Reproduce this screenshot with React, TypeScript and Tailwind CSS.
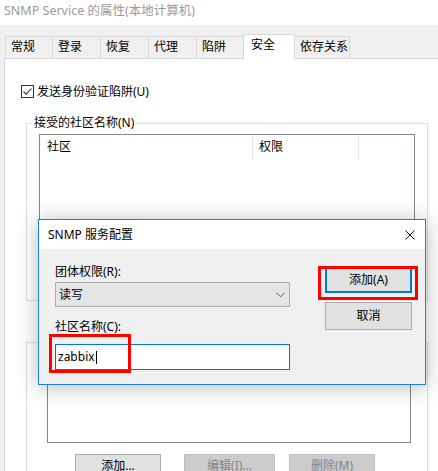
import React from "react";

const Tab = ({ label, w, active, first }: { label: string; w: string; active?: boolean; first?: boolean }) => {
  if (active) {
    return (
      <div className={`${w} ${first ? "" : "-ml-px"} h-[25px] -mb-px relative z-10 bg-white border border-b-0 border-[#d9d9d9] pl-[7px] pt-[2px] leading-[16px]`}>
        {label}
      </div>
    );
  }
  return (
    <div className={`${w} ${first ? "" : "-ml-px"} h-[22px] bg-[#f0f0f0] border border-b-0 border-[#d9d9d9] pl-[5px] pt-[2px] leading-[16px]`}>
      {label}
    </div>
  );
};

export default function App() {
  return (
    <div className="relative w-[438px] h-[471px] overflow-hidden bg-[#f0f0f0] text-[12px] leading-[16px] text-black font-['Noto_Sans','Noto_Sans_CJK_SC',sans-serif]">
      {/* window title */}
      <div className="h-[25px] bg-white pl-[4px] pt-[2px] text-[12.5px] leading-[18px] text-[#9a9a9a]">
        SNMP Service 的属性(本地计算机)
      </div>

      {/* tabs */}
      <div className="h-[33px] flex items-end pl-[5px]">
        <Tab label="常规" w="w-[48px]" first />
        <Tab label="登录" w="w-[49px]" />
        <Tab label="恢复" w="w-[49px]" />
        <Tab label="代理" w="w-[49px]" />
        <Tab label="陷阱" w="w-[48px]" />
        <Tab label="安全" w="w-[52px]" active />
        <Tab label="依存关系" w="w-[56px]" />
      </div>

      {/* tab page */}
      <div className="ml-[4px] h-[413px] bg-white border-t border-l border-[#d9d9d9] pl-[16px] pt-[26px]">
        <div className="flex items-center h-[13px]">
          <div className="w-[13px] h-[13px] border border-[#333] bg-white flex items-center justify-center">
            <svg width="11" height="11" viewBox="0 0 11 11">
              <path d="M1.5 5.5 L4.2 8.2 L9.5 2.5" fill="none" stroke="#333" strokeWidth="1.1" />
            </svg>
          </div>
          <span className="ml-[3px] leading-[16px]">发送身份验证陷阱(U)</span>
        </div>

        {/* group 1 */}
        <div className="relative ml-[5px] mt-[25px] w-[402px] h-[178px] border border-[#dcdcdc]">
          <span className="absolute left-[5px] -top-[9px] bg-white px-[2px] leading-[16px]">接受的社区名称(N)</span>
          <div className="ml-[12px] mt-[10px] w-[376px] h-[130px] border border-[#828790] bg-white">
            <div className="flex h-[26px]">
              <div className="w-[212px] pl-[7px] pt-[4px]">社区</div>
              <div className="w-px h-[24px] mt-px bg-[#e5e5e5]" />
              <div className="w-[105px] pl-[6px] pt-[4px]">权限</div>
              <div className="w-px h-[24px] mt-px bg-[#e5e5e5]" />
            </div>
          </div>
        </div>

        {/* group 2 */}
        <div className="relative ml-[5px] mt-[41px] w-[402px] h-[200px] border border-[#dcdcdc]">
          <div className="ml-[20px] mt-[19px] w-[364px] h-[81px] border border-[#828790] bg-white" />
          <div className="flex mt-[11px] pl-[48px]">
            <div className="w-[86px] h-[23px] border border-[#adadad] bg-[#e1e1e1] flex items-center justify-center">添加...</div>
            <div className="ml-[23px] w-[91px] h-[23px] border border-[#bfbfbf] bg-[#cccccc] text-[#838383] flex items-center justify-center">编辑(I)...</div>
            <div className="ml-[14px] w-[86px] h-[23px] border border-[#bfbfbf] bg-[#cccccc] text-[#838383] flex items-center justify-center">删除(M)</div>
          </div>
        </div>
      </div>

      {/* dialog overlay */}
      <div className="absolute left-[38px] top-[219px] w-[388px] h-[166px] border border-[#1883d7] bg-[#f0f0f0] shadow-[0_2px_20px_rgba(0,0,0,0.28)]">
        <div className="h-[29px] bg-white flex items-center justify-between pl-[9px] pr-[10px]">
          <span className="leading-[16px]">SNMP 服务配置</span>
          <svg width="10" height="10" viewBox="0 0 10 10">
            <path d="M0.5 0.5 L9.5 9.5 M9.5 0.5 L0.5 9.5" stroke="#111" strokeWidth="1" />
          </svg>
        </div>
        <div className="flex pl-[16px]">
          <div className="w-[235px] pt-[15px]">
            <div className="leading-[16px]">团体权限(R):</div>
            <div className="mt-[2px] h-[25px] border border-[#acacac] bg-[#e5e5e5] flex items-center justify-between pl-[3px] pr-[4px]">
              <span>读写</span>
              <svg width="9" height="6" viewBox="0 0 9 6">
                <path d="M0.5 0.8 L4.5 4.8 L8.5 0.8" fill="none" stroke="#555" strokeWidth="1" />
              </svg>
            </div>
            <div className="mt-[12px] leading-[16px]">社区名称(C):</div>
            <div className="mt-[9px] h-[26px] border border-[#0078d7] bg-white flex items-center pl-[2px]">
              <span>zabbix</span>
              <span className="ml-[1px] w-px h-[13px] bg-black" />
            </div>
          </div>
          <div className="ml-[35px] pt-[17px]">
            <div className="w-[87px] h-[27px] border-2 border-[#0078d7] bg-[#e1e1e1] flex items-center justify-center">添加(A)</div>
            <div className="mt-[9px] w-[87px] h-[28px] border border-[#adadad] bg-[#e1e1e1] flex items-center justify-center">取消</div>
          </div>
        </div>

        {/* red highlight boxes */}
        <div className="absolute left-[10px] top-[114px] w-[82px] h-[39px] border-[3px] border-[#ff0000]" />
        <div className="absolute left-[279px] top-[46px] w-[100px] h-[34px] border-[3px] border-[#ff0000]" />
      </div>
    </div>
  );
}
